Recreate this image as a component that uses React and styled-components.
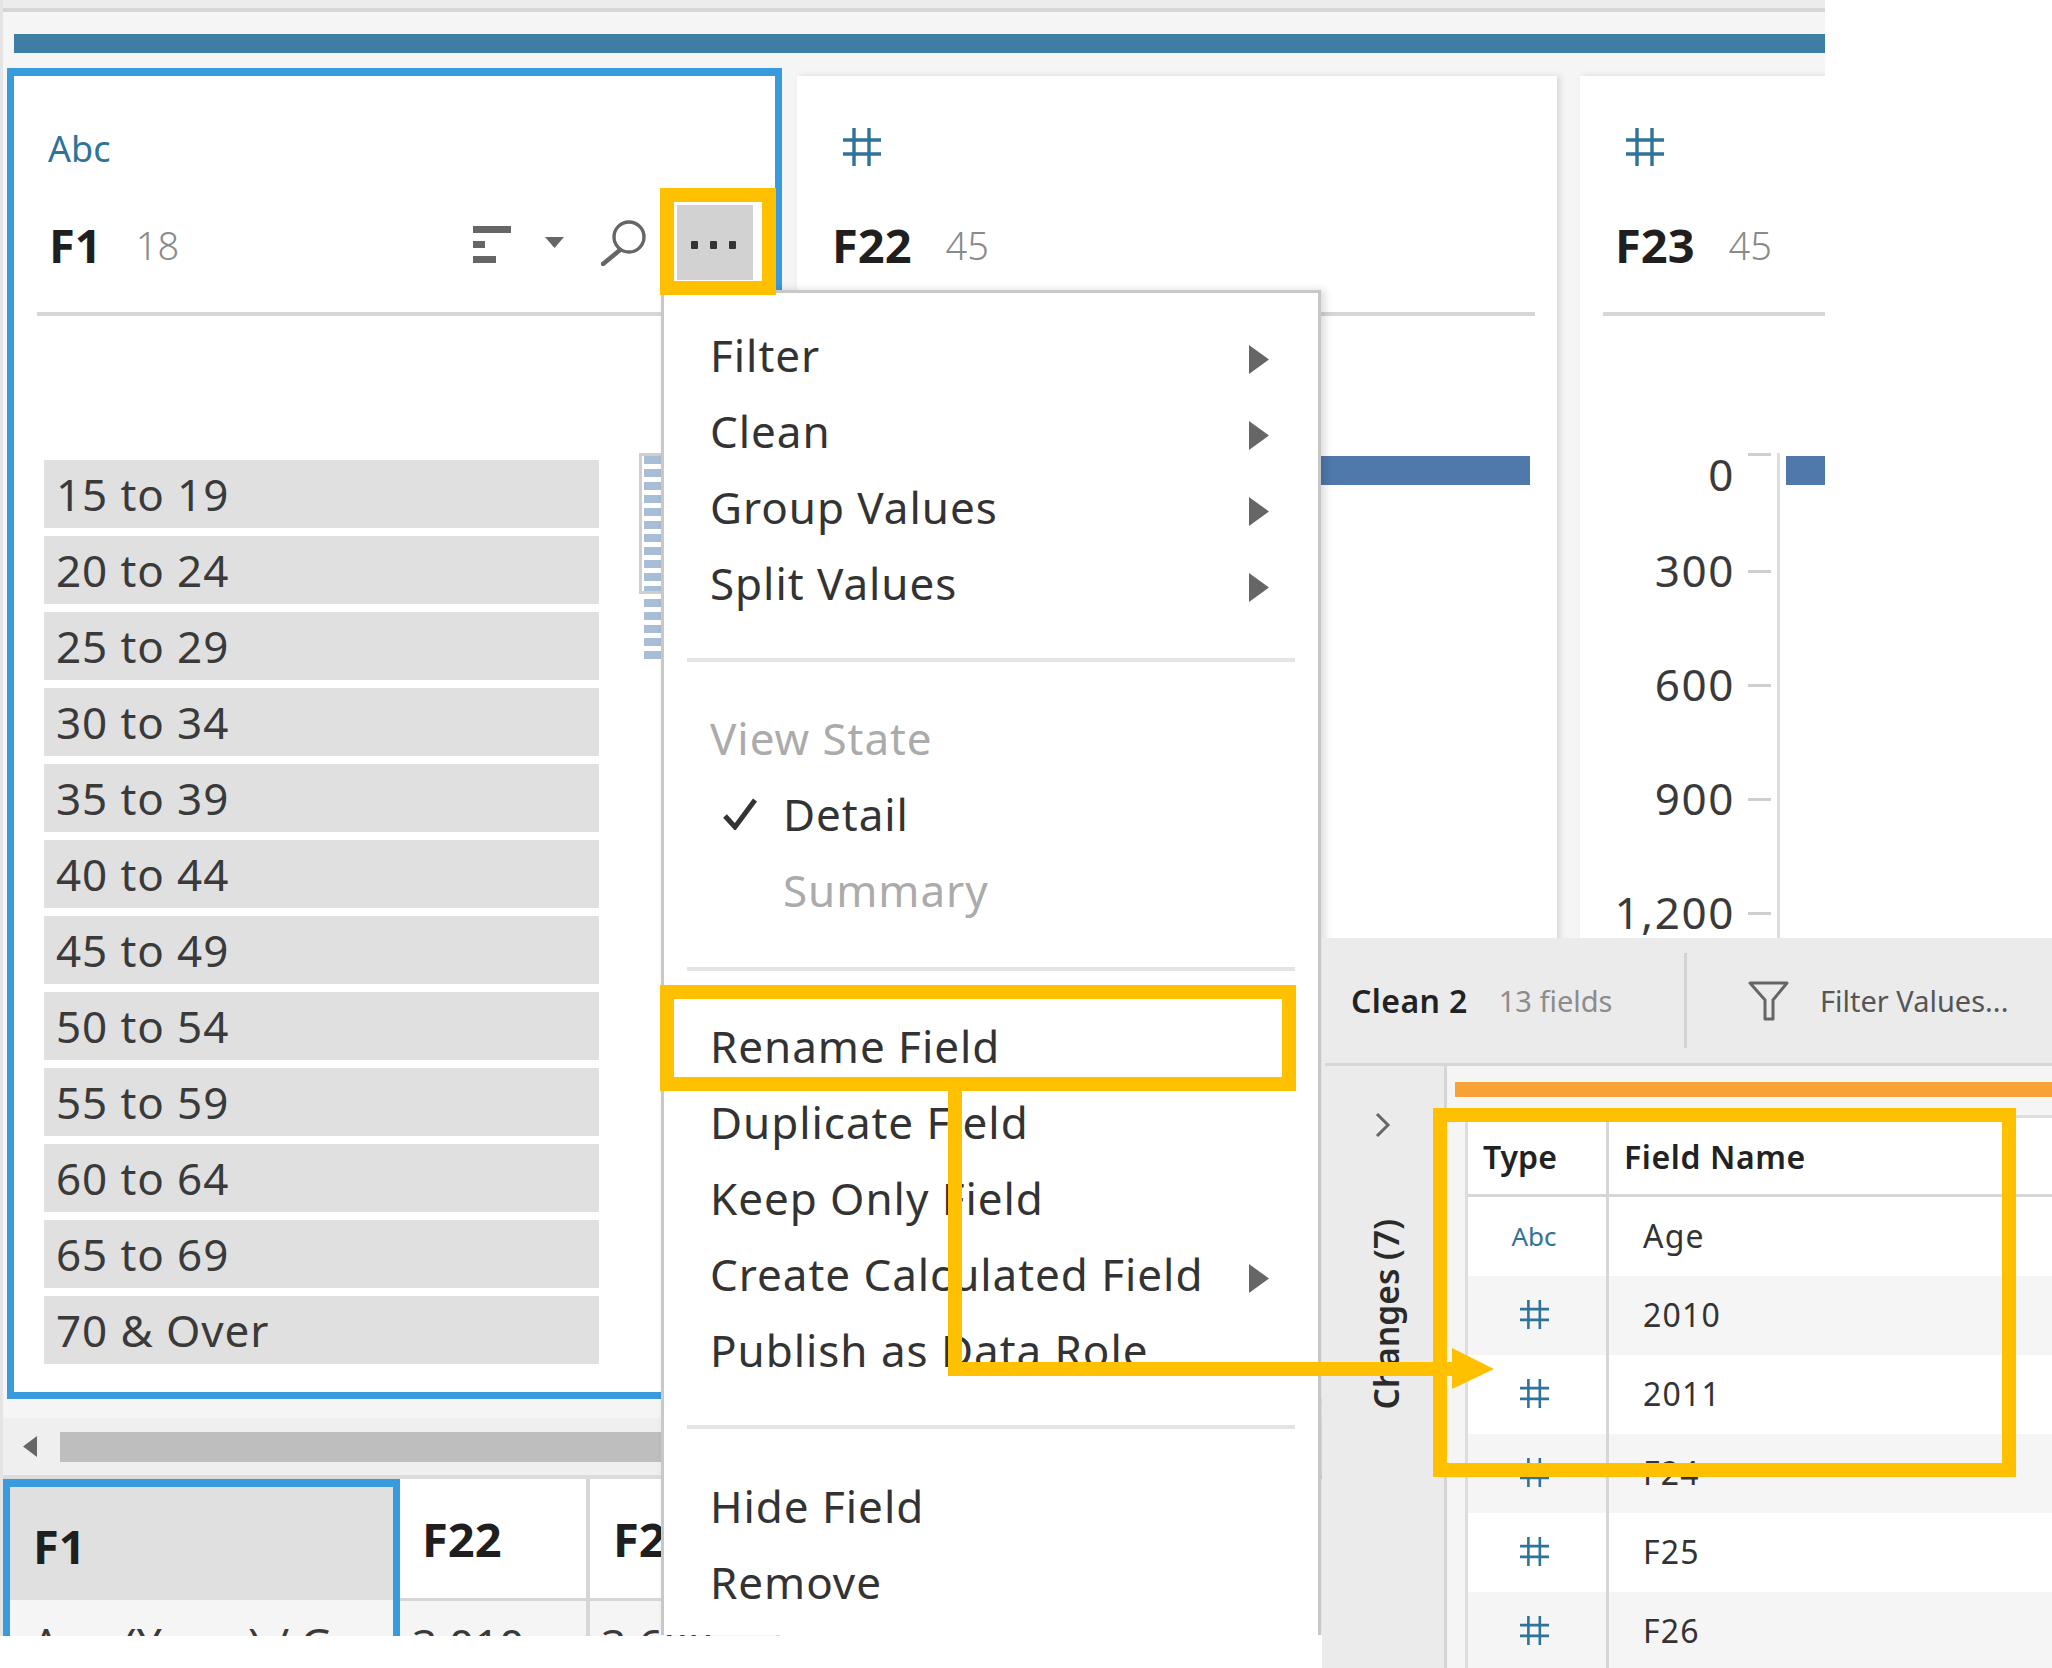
import React from 'react';
import styled, { createGlobalStyle } from 'styled-components';

const GlobalStyle = createGlobalStyle`
  html, body { margin: 0; padding: 0; background: #fff; }
  body { font-family: "Noto Sans", "Open Sans", sans-serif; color: #333; }
  * { box-sizing: border-box; }
`;

const Canvas = styled.div`
  position: relative;
  width: 2052px;
  height: 1668px;
  overflow: hidden;
  background: #fff;
`;

/* left screenshot: profile pane */
const ProfileWindow = styled.div`
  width: 1825px;
  height: 1636px;
  overflow: hidden;
  background: #f5f5f5;
  border-left: 3px solid #e4e4e4;
  display: flex;
  flex-direction: column;
`;

const TopStrip = styled.div`
  height: 12px;
  margin-left: -3px;
  background: #ececec;
  border-bottom: 4px solid #d6d6d6;
  flex: none;
`;

const FlowBar = styled.div`
  height: 19px;
  margin: 22px 0 0 11px;
  background: #3e7ea5;
  flex: none;
`;

const Cards = styled.div`
  display: flex;
  height: 1331px;
  margin-top: 15px;
  padding-left: 4px;
  flex: none;
`;

const Card = styled.section`
  flex: none;
  width: ${p => p.$width}px;
  background: #fff;
  margin-right: ${p => p.$gap}px;
  box-shadow: ${p => (p.$selected ? 'none' : '3px 0 6px rgba(0, 0, 0, 0.12)')};
  border: ${p => (p.$selected ? '8px solid #3a9ade' : 'none')};
  border-width: ${p => (p.$selected ? '8px 7px 7px' : '0')};
  margin-top: ${p => (p.$selected ? 0 : 8)}px;
`;

const CardHead = styled.div`
  margin: 0 22px 0 23px;
  padding-top: 50px;
  border-bottom: 4px solid #d6d6d6;
`;

const TypeSlot = styled.div`
  height: 44px;
  display: flex;
  align-items: center;
  margin-top: -1px;
  margin-bottom: 1px;
  padding-left: ${p => p.$pad}px;
  color: #2f7398;
`;

const TypeText = styled.span`
  font-size: 36px;
  line-height: 44px;
  margin-top: 3px;
`;

const NameRow = styled.div`
  display: flex;
  align-items: center;
  height: 75px;
  margin: 36px 0 32px;
  padding-left: 12px;
`;

const FieldName = styled.span`
  font-size: 47px;
  font-weight: 700;
  color: #1f1f1f;
  line-height: 60px;
  margin-top: 4px;
`;

const FieldCount = styled.span`
  font-size: 38px;
  font-weight: 300;
  color: #8a8a8a;
  margin-left: 34px;
  margin-top: 4px;
`;

const Tools = styled.div`
  display: flex;
  align-items: center;
  margin-left: auto;
`;

const SortIcon = styled.svg`
  width: 38px;
  height: 37px;
  margin-top: 4px;
`;

const CaretIcon = styled.svg`
  width: 19px;
  height: 11px;
  margin-left: 34px;
`;

const SearchIcon = styled.svg`
  width: 45px;
  height: 46px;
  margin-left: 37px;
`;

const MoreButton = styled.div`
  width: 76px;
  height: 75px;
  margin-left: 31px;
  background: #d2d2d2;
  display: flex;
  align-items: center;
  justify-content: center;
  gap: 12px;
  padding-top: 5px;
  padding-right: 4px;
`;

const Dot = styled.i`
  width: 7px;
  height: 8px;
  background: #333;
  border-radius: 1px;
`;

const CardBody = styled.div`
  display: flex;
  padding: ${p => p.$top}px 0 0 ${p => p.$left}px;
`;

const ValueList = styled.div`
  width: 555px;
  flex: none;
  display: flex;
  flex-direction: column;
  gap: 8px;
`;

const ValueRow = styled.div`
  height: 68px;
  background: #e0e0e0;
  padding-left: 12px;
  font-size: 44px;
  letter-spacing: 0.9px;
  line-height: 68px;
  color: #3a3a3a;
`;

const MiniMap = styled.div`
  position: relative;
  flex: none;
  width: 40px;
  height: 210px;
  margin: -7px 0 0 40px;
  padding: 3px 0 0 5px;
  display: flex;
  flex-direction: column;
  gap: 5px;
`;

const MiniFrame = styled.div`
  position: absolute;
  left: 0;
  top: 0;
  width: 40px;
  height: 141px;
  border: 3px solid #cfcfcf;
`;

const MiniStripe = styled.div`
  height: 8px;
  flex: none;
  background: #a8bdd6;
`;

const Bar = styled.div`
  height: 29px;
  background: #4f79ab;
  width: ${p => p.$width}px;
  margin-left: ${p => p.$left}px;
  flex: none;
`;

const AxisColumn = styled.div`
  flex: none;
  width: 200px;
  height: 620px;
  border-right: 3px solid #dddddd;
  margin-top: -3px;
`;

const AxisRow = styled.div`
  height: ${p => (p.$first ? 61 : 114)}px;
  display: flex;
  justify-content: flex-end;
  align-items: ${p => (p.$first ? 'flex-start' : 'center')};
  padding-right: 6px;
`;

const AxisLabel = styled.span`
  font-size: 44px;
  letter-spacing: 1.6px;
  line-height: 60px;
  color: #3a3a3a;
  margin-top: ${p => (p.$first ? -9 : -2)}px;
`;

const AxisTick = styled.i`
  width: 23px;
  height: 3px;
  margin-left: 13px;
  background: #cfcfcf;
`;

const ScrollArea = styled.div`
  height: 80px;
  flex: none;
  padding-top: 19px;
`;

const ScrollTrack = styled.div`
  height: 61px;
  margin-left: -3px;
  background: #efefef;
  border-bottom: 4px solid #dcdcdc;
  display: flex;
  align-items: center;
  padding-left: 23px;
`;

const ScrollThumb = styled.div`
  width: 700px;
  height: 30px;
  margin-left: 23px;
  background: #bebebe;
`;

const DataTable = styled.div`
  display: flex;
  flex: 1;
  background: #fff;
  margin-left: -3px;
  padding-left: 3px;
`;

const DataColumn = styled.div`
  flex: none;
  width: ${p => p.$width}px;
  display: flex;
  flex-direction: column;
  border-right: 4px solid ${p => (p.$selected ? 'transparent' : '#d6d6d6')};
  ${p => p.$selected && 'border: 7px solid #3a9ade; border-top-width: 8px; border-bottom: none;'}
`;

const DataHead = styled.div`
  height: ${p => (p.$selected ? 113 : 122)}px;
  flex: none;
  background: ${p => (p.$selected ? '#e0e0e0' : '#fff')};
  padding-left: ${p => p.$pad}px;
  border-bottom: ${p => (p.$selected ? 'none' : '3px solid #d6d6d6')};
  font-size: 47px;
  font-weight: 700;
  line-height: ${p => (p.$selected ? 118 : 120)}px;
  color: #1f1f1f;
`;

const DataCell = styled.div`
  flex: 1;
  background: #f5f5f5;
  padding: 13px 0 0 ${p => p.$pad}px;
  font-size: 44px;
  line-height: 60px;
  white-space: nowrap;
  overflow: hidden;
  color: #3a3a3a;
`;

/* pop-up menu */
const Menu = styled.div`
  position: absolute;
  left: 661px;
  top: 290px;
  width: 660px;
  height: 1345px;
  overflow: hidden;
  padding-top: 24px;
  background: #fff;
  border: 3px solid #c8c8c8;
  border-bottom: none;
  box-shadow: 4px 0 8px rgba(0, 0, 0, 0.14);
  clip-path: inset(-20px -20px 0 -20px);
`;

const MenuItem = styled.div`
  height: 76px;
  display: flex;
  align-items: center;
  padding: 0 49px 0 ${p => p.$pad || 46}px;
  font-size: 44px;
  letter-spacing: 0.95px;
  white-space: nowrap;
  color: ${p => (p.$disabled ? '#ababab' : '#333')};
`;

const MenuArrow = styled.svg`
  width: 20px;
  height: 29px;
  margin: 8px 0 0 auto;
  flex: none;
`;

const MenuDivider = styled.div`
  height: 4px;
  background: #e4e4e4;
  margin: ${p => p.$top || 37}px 23px ${p => p.$bottom || 38}px;
`;

const CheckIcon = styled.svg`
  width: 34px;
  height: 32px;
  margin-right: 26px;
  flex: none;
`;

/* step panel overlapping the bottom right */
const StepPanel = styled.div`
  position: absolute;
  left: 1322px;
  top: 938px;
  width: 730px;
  height: 730px;
  background: #ebebeb;
  display: flex;
  flex-direction: column;
`;

const StepHeader = styled.div`
  height: 128px;
  flex: none;
  margin-left: 3px;
  border-bottom: 3px solid #d6d6d6;
  display: flex;
  align-items: center;
`;

const StepTitle = styled.div`
  width: 359px;
  flex: none;
  padding-left: 26px;
  display: flex;
  align-items: center;
`;

const StepName = styled.span`
  font-size: 32px;
  font-weight: 600;
  letter-spacing: 0.4px;
  color: #222;
`;

const StepCount = styled.span`
  font-size: 29px;
  color: #8c8c8c;
  margin-left: 31px;
`;

const HeaderSep = styled.div`
  width: 3px;
  height: 95px;
  background: #d4d4d4;
  flex: none;
`;

const FunnelIcon = styled.svg`
  width: 41px;
  height: 40px;
  margin: 0 0 0 61px;
  flex: none;
`;

const FilterText = styled.span`
  font-size: 29px;
  color: #555;
  margin-left: 31px;
  white-space: nowrap;
`;

const StepBody = styled.div`
  flex: 1;
  display: flex;
  min-height: 0;
`;

const ChangesRail = styled.div`
  width: 125px;
  flex: none;
  border-right: 3px solid #d6d6d6;
  display: flex;
  flex-direction: column;
  align-items: center;
  padding-top: 46px;
`;

const ChevronIcon = styled.svg`
  width: 16px;
  height: 26px;
  flex: none;
`;

const ChangesLabel = styled.span`
  writing-mode: vertical-rl;
  transform: rotate(180deg);
  font-size: 33.5px;
  font-weight: 600;
  color: #2a2a2a;
  margin: 81px 0 0 6px;
  white-space: nowrap;
`;

const StepMain = styled.div`
  flex: 1;
  min-width: 0;
  background: #f5f5f5;
  padding-top: 16px;
`;

const OrangeBar = styled.div`
  height: 15px;
  margin-left: 8px;
  background: #f7a137;
`;

const FieldTable = styled.div`
  margin: 18px 0 0 18px;
  border-top: 3px solid #dddddd;
  border-left: 3px solid #dddddd;
`;

const FieldRow = styled.div`
  display: grid;
  grid-template-columns: 141px 1fr;
  height: 79px;
  background: ${p => (p.$shade ? '#f5f5f5' : '#fff')};
  border-bottom: ${p => (p.$head ? '3px solid #d6d6d6' : 'none')};
`;

const TypeCell = styled.div`
  display: flex;
  align-items: center;
  justify-content: ${p => (p.$head ? 'flex-start' : 'center')};
  padding: ${p => (p.$head ? '0 0 0 15px' : '0 6px 2px 0')};
  border-right: 3px solid #d6d6d6;
  color: ${p => (p.$head ? '#222' : '#2f7398')};
  font-size: ${p => (p.$head ? 32 : 26)}px;
  font-weight: ${p => (p.$head ? 600 : 400)};
`;

const NameCell = styled.div`
  display: flex;
  align-items: center;
  padding: ${p => (p.$head ? '0 0 0 15px' : '0 0 2px 34px')};
  font-size: 32px;
  font-weight: ${p => (p.$head ? 600 : 400)};
  letter-spacing: ${p => (p.$head ? 0.6 : 1.2)}px;
  color: ${p => (p.$head ? '#222' : '#333')};
`;

const AnnotationLayer = styled.svg`
  position: absolute;
  left: 0;
  top: 0;
  width: 2052px;
  height: 1668px;
  pointer-events: none;
`;

const HashSvg = styled.svg`
  flex: none;
  margin-left: ${p => p.$offset || 0}px;
`;

const HashIcon = ({ size = 38, offset = 0 }) => (
  <HashSvg width={size} height={size} viewBox="0 0 38 38" $offset={offset}>
    <path d="M11 0V38M26 0V38M0 12H38M0 26H38" stroke="#2f7398" strokeWidth="3.4" fill="none" />
  </HashSvg>
);

const VALUES = ['15 to 19', '20 to 24', '25 to 29', '30 to 34', '35 to 39', '40 to 44', '45 to 49', '50 to 54', '55 to 59', '60 to 64', '65 to 69', '70 & Over'];
const AXIS = ['0', '300', '600', '900', '1,200'];
const FIELDS = [
  { type: 'abc', name: 'Age' },
  { type: 'num', name: '2010' },
  { type: 'num', name: '2011' },
  { type: 'num', name: 'F24' },
  { type: 'num', name: 'F25' },
  { type: 'num', name: 'F26' },
];

const Arrow = () => (
  <MenuArrow viewBox="0 0 20 29"><path d="M0 0L20 14.5L0 29Z" fill="#666" /></MenuArrow>
);

function SelectedCard() {
  return (
    <Card $selected $width={775} $gap={15}>
      <CardHead>
        <TypeSlot $pad={11}><TypeText>Abc</TypeText></TypeSlot>
        <NameRow>
          <FieldName>F1</FieldName>
          <FieldCount>18</FieldCount>
          <Tools>
            <SortIcon viewBox="0 0 38 37">
              <path d="M0 0H38V7H0ZM0 15H12V22H0ZM0 30H23V37H0Z" fill="#666" />
            </SortIcon>
            <CaretIcon viewBox="0 0 19 11"><path d="M0 0H19L9.5 11Z" fill="#666" /></CaretIcon>
            <SearchIcon viewBox="0 0 45 46">
              <circle cx="28" cy="17" r="15" fill="none" stroke="#666" strokeWidth="3.4" />
              <path d="M19 30L2 44" stroke="#666" strokeWidth="4.5" strokeLinecap="round" />
            </SearchIcon>
            <MoreButton><Dot /><Dot /><Dot /></MoreButton>
          </Tools>
        </NameRow>
      </CardHead>
      <CardBody $top={144} $left={30}>
        <ValueList>
          {VALUES.map(v => <ValueRow key={v}>{v}</ValueRow>)}
        </ValueList>
        <MiniMap>
          {Array.from({ length: 16 }, (_, i) => <MiniStripe key={i} />)}
          <MiniFrame />
        </MiniMap>
      </CardBody>
    </Card>
  );
}

function NumberCard({ name, width, gap, children }) {
  return (
    <Card $width={width} $gap={gap}>
      <CardHead>
        <TypeSlot $pad={0}><HashIcon offset={23} /></TypeSlot>
        <NameRow>
          <FieldName>{name}</FieldName>
          <FieldCount>45</FieldCount>
        </NameRow>
      </CardHead>
      {children}
    </Card>
  );
}

function FieldsGrid() {
  return (
    <FieldTable>
      <FieldRow $head>
        <TypeCell $head>Type</TypeCell>
        <NameCell $head>Field Name</NameCell>
      </FieldRow>
      {FIELDS.map((f, i) => (
        <FieldRow key={f.name} $shade={i % 2 === 1}>
          <TypeCell>{f.type === 'abc' ? 'Abc' : <HashIcon size={29} />}</TypeCell>
          <NameCell>{f.name}</NameCell>
        </FieldRow>
      ))}
    </FieldTable>
  );
}

export default function App() {
  return (
    <Canvas>
      <GlobalStyle />
      <ProfileWindow>
        <TopStrip />
        <FlowBar />
        <Cards>
          <SelectedCard />
          <NumberCard name="F22" width={760} gap={23}>
            <CardBody $top={140} $left={0}>
              <Bar $left={200} $width={533} />
            </CardBody>
          </NumberCard>
          <NumberCard name="F23" width={400} gap={0}>
            <CardBody $top={140} $left={0}>
              <AxisColumn>
                {AXIS.map((label, i) => (
                  <AxisRow key={label} $first={i === 0}>
                    <AxisLabel $first={i === 0}>{label}</AxisLabel>
                    <AxisTick />
                  </AxisRow>
                ))}
              </AxisColumn>
              <Bar $left={6} $width={120} />
            </CardBody>
          </NumberCard>
        </Cards>
        <ScrollArea>
          <ScrollTrack>
            <svg width="14" height="21" viewBox="0 0 14 21"><path d="M14 0V21L0 10.5Z" fill="#666" /></svg>
            <ScrollThumb />
          </ScrollTrack>
        </ScrollArea>
        <DataTable>
          <DataColumn $selected $width={397}>
            <DataHead $selected $pad={23}>F1</DataHead>
            <DataCell $pad={22}>Age (Years) / G...</DataCell>
          </DataColumn>
          <DataColumn $width={190}>
            <DataHead $pad={22}>F22</DataHead>
            <DataCell $pad={12}>3,010</DataCell>
          </DataColumn>
          <DataColumn $width={190}>
            <DataHead $pad={23}>F23</DataHead>
            <DataCell $pad={11}>3,608</DataCell>
          </DataColumn>
        </DataTable>
      </ProfileWindow>

      <Menu>
        <MenuItem>Filter<Arrow /></MenuItem>
        <MenuItem>Clean<Arrow /></MenuItem>
        <MenuItem>Group Values<Arrow /></MenuItem>
        <MenuItem>Split Values<Arrow /></MenuItem>
        <MenuDivider />
        <MenuItem $disabled>View State</MenuItem>
        <MenuItem $pad={59}>
          <CheckIcon viewBox="0 0 34 32">
            <path d="M2 18L12 29L32 2" fill="none" stroke="#333" strokeWidth="5" />
          </CheckIcon>
          Detail
        </MenuItem>
        <MenuItem $disabled $pad={119}>Summary</MenuItem>
        <MenuDivider $top={39} $bottom={37} />
        <MenuItem>Rename Field</MenuItem>
        <MenuItem>Duplicate Field</MenuItem>
        <MenuItem>Keep Only Field</MenuItem>
        <MenuItem>Create Calculated Field<Arrow /></MenuItem>
        <MenuItem>Publish as Data Role</MenuItem>
        <MenuDivider $bottom={39} />
        <MenuItem>Hide Field</MenuItem>
        <MenuItem>Remove</MenuItem>
      </Menu>

      <StepPanel>
        <StepHeader>
          <StepTitle>
            <StepName>Clean 2</StepName>
            <StepCount>13 fields</StepCount>
          </StepTitle>
          <HeaderSep />
          <FunnelIcon viewBox="0 0 41 40">
            <path d="M2 2H39L25 19V38H17V19Z" fill="none" stroke="#666" strokeWidth="3" strokeLinejoin="round" />
          </FunnelIcon>
          <FilterText>Filter Values...</FilterText>
        </StepHeader>
        <StepBody>
          <ChangesRail>
            <ChevronIcon viewBox="0 0 16 26">
              <path d="M2 2L13 13L2 24" fill="none" stroke="#666" strokeWidth="3" />
            </ChevronIcon>
            <ChangesLabel>Changes (7)</ChangesLabel>
          </ChangesRail>
          <StepMain>
            <OrangeBar />
            <FieldsGrid />
          </StepMain>
        </StepBody>
      </StepPanel>

      <AnnotationLayer viewBox="0 0 2052 1668">
        <g fill="none" stroke="#ffc000" strokeWidth="14">
          <rect x="667" y="195" width="102" height="93" />
          <rect x="667" y="992" width="622" height="92" />
          <rect x="1440" y="1115" width="569" height="355" />
          <path d="M955 1091V1369H1460" />
        </g>
        <path d="M1452 1348L1494 1369L1452 1389Z" fill="#ffc000" />
      </AnnotationLayer>
    </Canvas>
  );
}
